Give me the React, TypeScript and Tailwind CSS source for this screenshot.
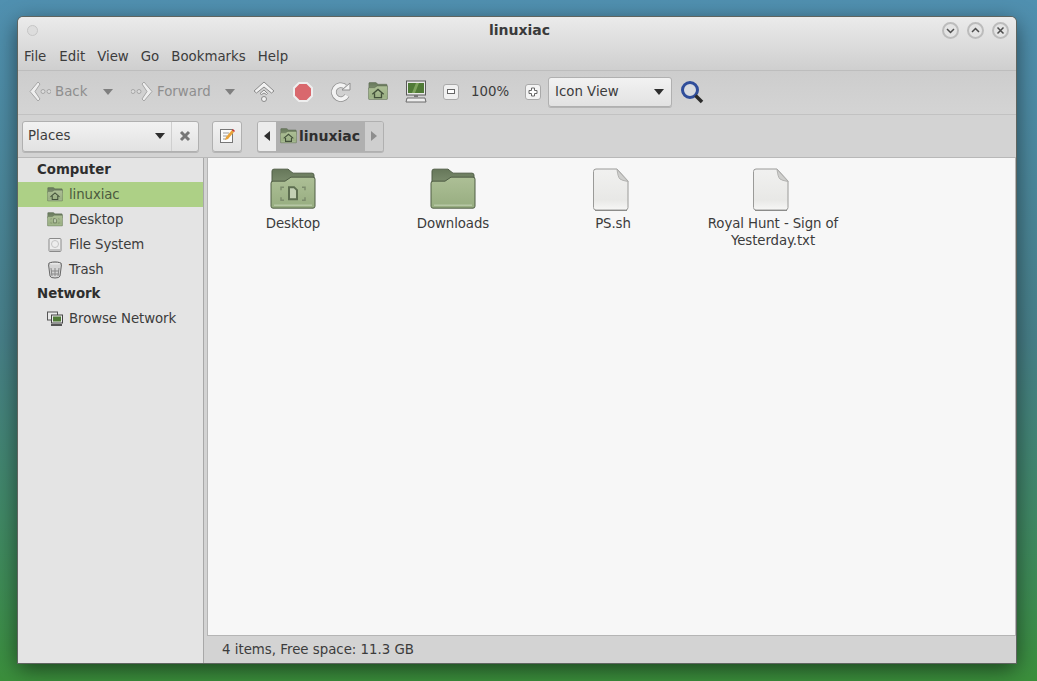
import { ReactNode, useId } from 'react'

function Caret({ className = '' }: { className?: string }) {
  return (
    <svg className={className} width="12" height="6" viewBox="0 0 12 6">
      <path d="M1 0h10L6 6z" fill="currentColor" />
    </svg>
  )
}

function GreenFolder({ size, children }: { size: number; children?: ReactNode }) {
  const id = useId()
  const tabId = useId()
  return (
    <svg width={size} height={size * 0.92} viewBox="0 0 46 42">
      <defs>
        <linearGradient id={id} x1="0" y1="0" x2="0" y2="1">
          <stop offset="0" stopColor="#adbf96" />
          <stop offset="1" stopColor="#97ad80" />
        </linearGradient>
        <linearGradient id={tabId} x1="0" y1="0" x2="0" y2="1">
          <stop offset="0" stopColor="#66775a" />
          <stop offset="1" stopColor="#7f9070" />
        </linearGradient>
      </defs>
      <path d="M2 3q0-2 2-2h14l5 4h19q2 0 2 2v10H2z" fill={`url(#${tabId})`} stroke="#4f5d45" />
      <path d="M1 15q0-2 2-2h12l6-4h22q2 0 2 2v27q0 2-2 2H3q-2 0-2-2z" fill={`url(#${id})`} stroke="#4f5d45" />
      <path d="M4 37h38" stroke="#c5d3b6" strokeWidth="1" />
      {children}
    </svg>
  )
}

function HomeGlyph() {
  return (
    <g fill="none" stroke="#42503a" strokeWidth="3">
      <path d="M10 28l13-11 13 11" />
      <path d="M15 26v10h16V26" />
    </g>
  )
}

function DesktopGlyph() {
  return (
    <g fill="none" stroke="#5d6e50" strokeWidth="2">
      <path d="M14 19h-3v3M32 19h3v3M14 32h-3v-3M32 32h3v-3" strokeWidth="1.500" stroke="#7c8c6c" />
      <path d="M19 19h5l3 3v9h-8z" fill="#c3d0b4" />
    </g>
  )
}

function FileIcon() {
  const id = useId()
  return (
    <svg width="38" height="44" viewBox="0 0 38 44">
      <defs>
        <linearGradient id={id} x1="0" y1="0" x2="0" y2="1">
          <stop offset="0" stopColor="#f1f1f0" />
          <stop offset="0.75" stopColor="#e8e8e6" />
          <stop offset="1" stopColor="#f7f7f6" />
        </linearGradient>
      </defs>
      <path d="M1.500 3.500q0-2.500 2.500-2.500h21l11 12v26.500q0 2.500-2.500 2.500H4q-2.500 0-2.500-2.500z" fill={`url(#${id})`} stroke="#9a9a98" />
      <path d="M25 1.500q1 8 3 9.500t8 2.500z" fill="#cfcfcd" stroke="#b3b3b1" />
      <path d="M3 42.500h32" stroke="#8c8c8a" />
    </svg>
  )
}

function NavArrow({ flip = false }: { flip?: boolean }) {
  return (
    <svg width="23" height="23" viewBox="0 0 23 23" className={flip ? '-scale-x-100' : ''}>
      <path d="M10 2L2 11.500 10 21l2-2-5-7.500 5-7.500z" fill="#eeeeee" stroke="#a6a6a6" />
      <circle cx="15" cy="11.500" r="2" fill="#ddd" stroke="#a6a6a6" />
      <circle cx="21" cy="11.500" r="2" fill="#ddd" stroke="#a6a6a6" />
    </svg>
  )
}

function WinButton({ d }: { d: string }) {
  return (
    <div className="flex h-[17px] w-[17px] items-center justify-center rounded-full border-2 border-[#bcbcbc] bg-[#e4e4e4]">
      <svg width="9" height="9" viewBox="0 0 9 9">
        <path d={d} fill="none" stroke="#4c4c4c" strokeWidth="1.500" />
      </svg>
    </div>
  )
}

function SideRow({ icon, label, active = false }: { icon: ReactNode; label: string; active?: boolean }) {
  return (
    <div className={`flex h-[25px] items-center pl-[29px] tracking-[-0.1px] ${active ? 'bg-[#add086] text-[#4b5a3e]' : 'text-[#3c3c3c]'}`}>
      <div className="flex w-[16px] justify-center">{icon}</div>
      <span className="ml-[6px]">{label}</span>
    </div>
  )
}

function GridItem({ icon, label }: { icon: ReactNode; label: string }) {
  return (
    <div className="flex w-[160px] flex-col items-center">
      <div className="flex h-[43px] items-start">{icon}</div>
      <div className="mt-[4px] w-[136px] text-center leading-[17px] tracking-[-0.1px] text-[#3c3c3c]">{label}</div>
    </div>
  )
}

export default function App() {
  return (
    <div className="h-[681px] w-[1037px] overflow-hidden bg-gradient-to-b from-[#5090b0] via-[#477f88] to-[#3b8f3b] pl-[18px] pt-[17px] text-[13.33px] font-['DejaVu_Sans',sans-serif]">
      <div className="flex h-[646px] w-[998px] flex-col overflow-hidden rounded-t-[5px] bg-[#d3d3d3] shadow-[0_0_0_1px_#5f6560,0_6px_22px_rgba(0,0,0,0.55)]">
        {/* titlebar + menu */}
        <div className="h-[54px] border-b border-[#bdbdbd] bg-gradient-to-b from-[#ebebeb] to-[#cfcfcf]">
          <div className="flex h-[26px] items-center pl-[9px] pr-[7px]">
            <div className="w-[70px]">
              <div className="h-[11px] w-[11px] rounded-full border border-[#c6c6c6] bg-[#dddddd]" />
            </div>
            <div className="flex-1 text-center text-[14px] font-bold text-[#3a3a3a]">linuxiac</div>
            <div className="flex gap-[8px]">
              <WinButton d="M1 3l3.500 3.500L8 3" />
              <WinButton d="M1 6l3.500-3.500L8 6" />
              <WinButton d="M1.500 1.500l6 6M7.500 1.500l-6 6" />
            </div>
          </div>
          <div className="flex h-[26px] items-center gap-[12px] pl-[6px] pt-[1px] text-[#3c3c3c]">
            <span>File</span>
            <span className="pl-[1px]">Edit</span>
            <span>View</span>
            <span>Go</span>
            <span>Bookmarks</span>
            <span>Help</span>
          </div>
        </div>

        {/* toolbar */}
        <div className="flex h-[44px] items-center border-b border-[#c2c2c2] bg-gradient-to-b from-[#cdcdcd] to-[#d4d4d4] pb-[2px] pl-[10px]">
          <NavArrow />
          <span className="ml-[4px] w-[32px] text-[#8e8e8e]">Back</span>
          <Caret className="ml-[15px] text-[#7f7f7f]" />
          <div className="ml-[17px]"><NavArrow flip /></div>
          <span className="ml-[3px] w-[53px] text-[#8e8e8e]">Forward</span>
          <Caret className="ml-[14px] text-[#7f7f7f]" />
          <svg className="ml-[17px]" width="22" height="24" viewBox="0 0 22 24">
            <path d="M11 2L1 11l2.500 2L11 7l7.500 6 2.500-2z" fill="#f1f1f1" stroke="#8a8a8a" />
            <path d="M11 10l-4 3.500 1.500 1L11 13l2.500 1.500 1-1z" fill="#f1f1f1" stroke="#8a8a8a" />
            <circle cx="11" cy="19" r="2.500" fill="#f1f1f1" stroke="#8a8a8a" />
          </svg>
          <svg className="ml-[17px]" width="22" height="22" viewBox="0 0 22 22">
            <path d="M7 2h8l5 5v8l-5 5H7l-5-5V7z" fill="#d9686d" stroke="#eeeeee" strokeWidth="2" />
          </svg>
          <svg className="ml-[16px]" width="22" height="22" viewBox="0 0 22 22">
            <path d="M17 14.500A7 7 0 1 1 15 5.500" fill="none" stroke="#8f8f8f" strokeWidth="5.500" />
            <path d="M17 14.500A7 7 0 1 1 15 5.500" fill="none" stroke="#f3f3f3" strokeWidth="4" />
            <path d="M12 9h8V2z" fill="#f3f3f3" stroke="#8f8f8f" />
          </svg>
          <div className="ml-[16px] flex"><GreenFolder size={20}><HomeGlyph /></GreenFolder></div>
          <svg className="ml-[17px]" width="22" height="24" viewBox="0 0 22 24">
            <rect x="1.500" y="1" width="19" height="14" fill="#e9e9e9" stroke="#5a5a5a" />
            <rect x="3" y="3" width="16" height="10" fill="#4f7a36" />
            <path d="M11 3l-4 10h3l4-10z" fill="#7da35c" />
            <path d="M9 15h4v2H9z" fill="#777" />
            <path d="M2 18h18l1 4H1z" fill="#ededed" stroke="#6a6a6a" />
          </svg>
          <div className="ml-[16px] flex h-[16px] w-[16px] items-center justify-center rounded-[3px] border border-[#a9a9a9] bg-[#f0f0f0]">
            <div className="h-[5px] w-[8px] border border-[#666] bg-white" />
          </div>
          <span className="ml-[12px] w-[40px] text-[#3c3c3c]">100%</span>
          <div className="ml-[14px] flex h-[16px] w-[16px] items-center justify-center rounded-[3px] border border-[#a9a9a9] bg-[#f4f4f4]">
            <svg width="10" height="10" viewBox="0 0 10 10">
              <path d="M3.500 1h3v2.500H9v3H6.500V9h-3V6.500H1v-3h2.500z" fill="#fff" stroke="#666" />
            </svg>
          </div>
          <div className="ml-[7px] flex h-[30px] w-[124px] items-center justify-between rounded-[3px] border border-[#b0b0b0] bg-gradient-to-b from-[#f2f2f2] to-[#e2e2e2] pl-[6px] pr-[6px] text-[#3c3c3c] shadow-[0_1px_0_#b5b5b5]">
            <span>Icon View</span>
            <Caret className="text-[#2e2e2e]" />
          </div>
          <svg className="ml-[8px]" width="24" height="24" viewBox="0 0 24 24">
            <circle cx="10" cy="10" r="7.500" fill="#dfe5ef" fillOpacity="0.5" stroke="#2f4d9a" strokeWidth="3" />
            <path d="M15.500 15.500L22 22" stroke="#2b2b2b" strokeWidth="3.500" />
          </svg>
        </div>

        {/* location bar */}
        <div className="flex h-[42px] items-center bg-[#d3d3d3] pl-[4px]">
          <div className="flex h-[31px] w-[177px] rounded-[3px] border border-[#b0b0b0] bg-gradient-to-b from-[#f2f2f2] to-[#e2e2e2] text-[#3c3c3c] shadow-[0_1px_0_#b5b5b5]">
            <div className="flex flex-1 items-center justify-between border-r border-[#cfcfcf] pl-[5px] pr-[5px]">
              <span>Places</span>
              <Caret className="text-[#2e2e2e]" />
            </div>
            <div className="flex w-[26px] items-center justify-center">
              <svg width="12" height="12" viewBox="0 0 12 12">
                <path d="M2 2l8 8M10 2l-8 8" stroke="#777" strokeWidth="3" />
              </svg>
            </div>
          </div>
          <div className="ml-[13px] flex h-[31px] w-[30px] items-center justify-center rounded-[3px] border border-[#b0b0b0] bg-gradient-to-b from-[#f2f2f2] to-[#e2e2e2] shadow-[0_1px_0_#b5b5b5]">
            <svg width="16" height="16" viewBox="0 0 16 16">
              <rect x="1.500" y="1.500" width="12" height="13" fill="#fbfbfb" stroke="#777" />
              <path d="M4 5h6M4 8h4M4 11h3" stroke="#999" />
              <path d="M6 12l1-3 6-7 2 2-6 7z" fill="#e8a33a" />
              <path d="M13 2l1-1 2 2-1 1z" fill="#cc2f2f" />
            </svg>
          </div>
          <div className="ml-[15px] flex h-[31px] w-[127px] overflow-hidden rounded-[3px] border border-[#b0b0b0] bg-[#dadada] shadow-[0_1px_0_#b5b5b5]">
            <div className="flex w-[18px] items-center justify-center bg-[#ececec]">
              <svg width="6" height="10" viewBox="0 0 6 10"><path d="M6 0v10L0 5z" fill="#2e2e2e" /></svg>
            </div>
            <div className="flex flex-1 items-center bg-[#b0b0b0] pl-[4px] text-[14px] font-bold text-[#2e2e2e]">
              <GreenFolder size={17}><HomeGlyph /></GreenFolder>
              <span className="ml-[2px]">linuxiac</span>
            </div>
            <div className="flex w-[18px] items-center justify-center bg-[#cfcfcf]">
              <svg width="6" height="10" viewBox="0 0 6 10"><path d="M0 0v10l6-5z" fill="#8e8e8e" /></svg>
            </div>
          </div>
        </div>

        {/* main */}
        <div className="flex flex-1 border-t border-[#b8b8b8]">
          <div className="w-[186px] border-r border-[#a8a8a8] bg-[#e4e4e4]">
            <div className="flex h-[24px] items-center pl-[19px] font-bold text-[#2e2e2e]">Computer</div>
            <SideRow active label="linuxiac" icon={<GreenFolder size={16}><HomeGlyph /></GreenFolder>} />
            <SideRow label="Desktop" icon={<GreenFolder size={16}><DesktopGlyph /></GreenFolder>} />
            <SideRow
              label="File System"
              icon={
                <svg width="16" height="16" viewBox="0 0 16 16">
                  <rect x="2" y="1.500" width="12" height="13" rx="1" fill="#ededed" stroke="#8a8a8a" />
                  <circle cx="8" cy="7" r="3.500" fill="none" stroke="#c4c4c4" />
                  <path d="M3 13h10" stroke="#999" />
                </svg>
              }
            />
            <SideRow
              label="Trash"
              icon={
                <svg width="16" height="18" viewBox="0 0 16 18">
                  <ellipse cx="8" cy="3" rx="6.500" ry="2" fill="#e8e8e8" stroke="#555" />
                  <path d="M1.500 3.500L3 15q.2 2 5 2t5-2l1.500-11.500" fill="#d4d4d4" stroke="#666" />
                  <path d="M4 7l1 8M8 7v8M12 7l-1 8M4 10h8M4 13h8" stroke="#8a8a8a" />
                </svg>
              }
            />
            <div className="flex h-[24px] items-center pl-[19px] font-bold text-[#2e2e2e]">Network</div>
            <SideRow
              label="Browse Network"
              icon={
                <svg width="16" height="16" viewBox="0 0 16 16">
                  <rect x="0.500" y="1" width="10" height="8" fill="#eaeaea" stroke="#555" />
                  <rect x="4.500" y="4" width="11" height="8" fill="#eaeaea" stroke="#444" />
                  <rect x="6" y="5.500" width="8" height="5" fill="#4f7a36" />
                  <path d="M4 14h11" stroke="#555" strokeWidth="2" />
                </svg>
              }
            />
          </div>
          <div className="flex flex-1 flex-col pl-[3px]">
            <div className="flex flex-1 items-start border-b border-l border-r border-[#b5b5b5] bg-[#f7f7f7] pl-[5px] pt-[10px]">
              <GridItem icon={<div className="mr-[1px]"><GreenFolder size={46}><DesktopGlyph /></GreenFolder></div>} label="Desktop" />
              <GridItem icon={<div className="mr-[1px]"><GreenFolder size={46} /></div>} label="Downloads" />
              <GridItem icon={<div className="mr-[5px]"><FileIcon /></div>} label="PS.sh" />
              <GridItem icon={<div className="mr-[5px]"><FileIcon /></div>} label="Royal Hunt - Sign of Yesterday.txt" />
            </div>
            <div className="flex h-[27px] items-center pl-[15px] text-[#3c3c3c]">4 items, Free space: 11.3 GB</div>
          </div>
        </div>
      </div>
    </div>
  )
}
